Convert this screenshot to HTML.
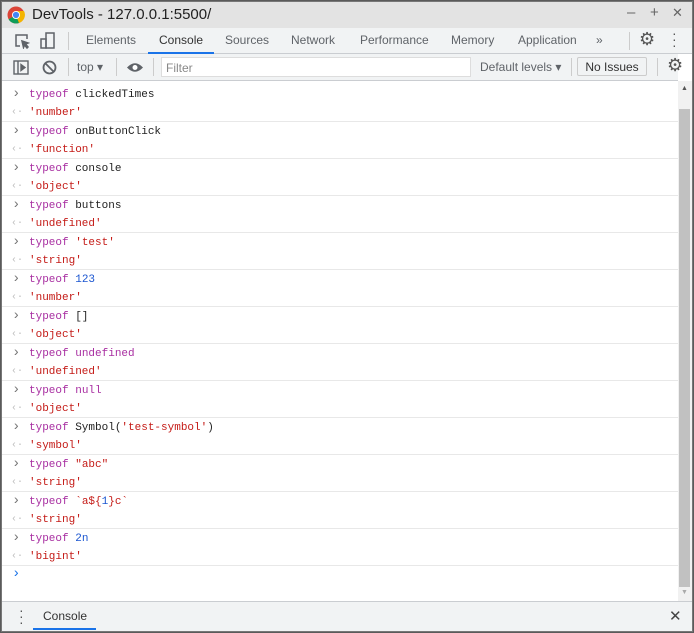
<!DOCTYPE html><html><head><style>
*{margin:0;padding:0;box-sizing:border-box}
body{width:694px;height:633px;overflow:hidden;background:#5a5a5a;font-family:"Liberation Sans",sans-serif;position:relative}
.win{position:absolute;left:1px;top:1px;width:692px;height:631px;background:#fff;border:1px solid #777}
.title{position:absolute;left:0;top:0;width:690px;height:26px;background:#e3e3e3;color:#222;font-size:15px}
.title span{position:absolute;left:30px;top:4px}
.tabs{position:absolute;left:0;top:26px;width:690px;height:26px;background:#f1f3f4;border-bottom:1px solid #cacdd1;font-size:12px;color:#5f6368}
.tabs div{position:absolute;top:5px}
.tb{position:absolute;left:0;top:52px;width:676px;height:27px;background:#f1f3f4;border-bottom:1px solid #cacdd1;font-size:12px;color:#5f6368}
.sep{position:absolute;width:1px;height:18px;background:#ccc}
.rows{position:absolute;left:0;top:83px;width:676px;font-family:"Liberation Mono",monospace;font-size:11px}
.e{height:37px;border-bottom:1px solid #e8e8e8;position:relative}
.e div{position:absolute;left:27px;height:18px;line-height:18px;white-space:pre}
.i{top:1px;color:#222}.o{top:19px;color:#c41a16}
.e:before{content:"›";position:absolute;left:10px;top:0;color:#777;font-size:14px;line-height:18px}
.e:after{content:"‹·";position:absolute;left:9px;top:19px;color:#bbb;font-size:10px;line-height:18px}
.k{color:#a82ea1}.n{color:#1a55d0}.s{color:#c41a16}
.drawer{position:absolute;left:0;top:599px;width:690px;height:30px;background:#f1f3f4;border-top:1px solid #cacdd1;font-size:12px;color:#333}
</style></head><body><div class="win">
<div class="title">
<svg style="position:absolute;left:5px;top:4px" width="18" height="18" viewBox="0 0 18 18"><circle cx="9" cy="9" r="8.5" fill="#db4437"/><path d="M9 9 L1.6 13.2 A8.5 8.5 0 0 0 12 17 Z" fill="#0f9d58"/><path d="M9 9 L12 17 A8.5 8.5 0 0 0 17 5 L9 5Z" fill="#f4b400"/><circle cx="9" cy="9" r="4" fill="#fff"/><circle cx="9" cy="9" r="3.1" fill="#4285f4"/></svg>
<span>DevTools - 127.0.0.1:5500/</span>
<span style="left:625px;top:2px;color:#666">–</span><span style="left:648px;top:2px;color:#666">+</span><span style="left:670px;top:3px;color:#666;font-size:13px">✕</span>
</div>
<div class="tabs">
<svg style="position:absolute;left:12px;top:5px" width="16" height="16" viewBox="0 0 16 16" fill="none" stroke="#5f6368" stroke-width="1.5"><path d="M6 13H2V2h11v4"/><path d="M8 8l6 2-2.5 1 2.5 3-1 1-2.5-3-1 2.5z" fill="#5f6368"/></svg>
<svg style="position:absolute;left:38px;top:4px" width="16" height="18" viewBox="0 0 16 18" fill="none" stroke="#5f6368" stroke-width="1.5"><rect x="6" y="1" width="8" height="15"/><rect x="1" y="7" width="5" height="9"/></svg>
<span class="sep" style="top:4px;left:66px"></span>
<div style="left:84px">Elements</div>
<div style="left:157px;color:#333">Console</div>
<span style="position:absolute;left:146px;top:24px;width:66px;height:2px;background:#1a73e8"></span>
<div style="left:223px">Sources</div><div style="left:289px">Network</div><div style="left:358px">Performance</div><div style="left:449px">Memory</div><div style="left:516px">Application</div><div style="left:594px">»</div>
<span class="sep" style="top:4px;left:627px"></span>
<div style="left:637px;top:1px;font-size:18px;color:#555">⚙</div>
<div style="left:670px;top:2px;font-size:14px;color:#555;line-height:6px">·<br>·<br>·</div>
</div>
<div class="tb">
<svg style="position:absolute;left:11px;top:6px" width="16" height="15" viewBox="0 0 16 15" fill="none" stroke="#5f6368" stroke-width="1.4"><rect x="1" y="1" width="14" height="13"/><path d="M5 1v13"/><path d="M8 4.5l4 3-4 3z" fill="#5f6368"/></svg>
<svg style="position:absolute;left:40px;top:6px" width="15" height="15" viewBox="0 0 15 15" fill="none" stroke="#5f6368" stroke-width="1.8"><circle cx="7.5" cy="7.5" r="6"/><path d="M3.3 3.3l8.4 8.4"/></svg>
<span class="sep" style="top:4px;left:66px"></span>
<div style="position:absolute;left:75px;top:6px">top ▾</div>
<span class="sep" style="top:4px;left:114px"></span>
<svg style="position:absolute;left:124px;top:8px" width="18" height="11" viewBox="0 0 18 11"><path d="M1 5.5Q9 -3 17 5.5Q9 14 1 5.5z" fill="#5f6368"/><circle cx="9" cy="5.5" r="2.5" fill="#fff"/></svg>
<span class="sep" style="top:4px;left:151px"></span>
<div style="position:absolute;left:159px;top:3px;width:310px;height:20px;background:#fff;border:1px solid #ddd;padding:3px 4px;color:#888">Filter</div>
<div style="position:absolute;left:478px;top:6px">Default levels ▾</div>
<span class="sep" style="top:4px;left:569px"></span>
<div style="position:absolute;left:575px;top:3px;width:70px;height:19px;border:1px solid #ccc;border-radius:2px;color:#333;padding:2px 0;text-align:center">No Issues</div>
<span class="sep" style="top:4px;left:655px"></span>
<div style="position:absolute;left:665px;top:1px;font-size:18px;color:#555">⚙</div>
</div>
<div style="position:absolute;left:676px;top:79px;width:14px;height:520px;background:#f1f1f1"><div style="position:absolute;left:1px;top:28px;width:11px;height:478px;background:#c1c1c1"></div><div style="position:absolute;left:3px;top:4px;font-size:7px;color:#555">▲</div><div style="position:absolute;left:3px;top:508px;font-size:7px;color:#aaa">▼</div></div>
<div class="rows">
<div class="e"><div class="i"><span class="k">typeof</span> clickedTimes</div><div class="o">'number'</div></div>
<div class="e"><div class="i"><span class="k">typeof</span> onButtonClick</div><div class="o">'function'</div></div>
<div class="e"><div class="i"><span class="k">typeof</span> console</div><div class="o">'object'</div></div>
<div class="e"><div class="i"><span class="k">typeof</span> buttons</div><div class="o">'undefined'</div></div>
<div class="e"><div class="i"><span class="k">typeof</span> <span class="s">'test'</span></div><div class="o">'string'</div></div>
<div class="e"><div class="i"><span class="k">typeof</span> <span class="n">123</span></div><div class="o">'number'</div></div>
<div class="e"><div class="i"><span class="k">typeof</span> []</div><div class="o">'object'</div></div>
<div class="e"><div class="i"><span class="k">typeof</span> <span class="k">undefined</span></div><div class="o">'undefined'</div></div>
<div class="e"><div class="i"><span class="k">typeof</span> <span class="k">null</span></div><div class="o">'object'</div></div>
<div class="e"><div class="i"><span class="k">typeof</span> Symbol(<span class="s">'test-symbol'</span>)</div><div class="o">'symbol'</div></div>
<div class="e"><div class="i"><span class="k">typeof</span> <span class="s">"abc"</span></div><div class="o">'string'</div></div>
<div class="e"><div class="i"><span class="k">typeof</span> <span class="s">`a${</span><span class="n">1</span><span class="s">}c`</span></div><div class="o">'string'</div></div>
<div class="e"><div class="i"><span class="k">typeof</span> <span class="n">2n</span></div><div class="o">'bigint'</div></div>
<div style="position:relative;height:20px"><span style="position:absolute;left:10px;top:0;color:#1a73e8;font-size:14px">›</span></div>
</div>
<div class="drawer">
<div style="position:absolute;left:17px;top:5px;font-size:14px;color:#555;line-height:6px">·<br>·<br>·</div>
<div style="position:absolute;left:41px;top:7px">Console</div>
<span style="position:absolute;left:31px;top:26px;width:63px;height:2px;background:#1a73e8"></span>
<div style="position:absolute;left:667px;top:5px;font-size:15px;color:#444">✕</div>
</div>
</div></body></html>
